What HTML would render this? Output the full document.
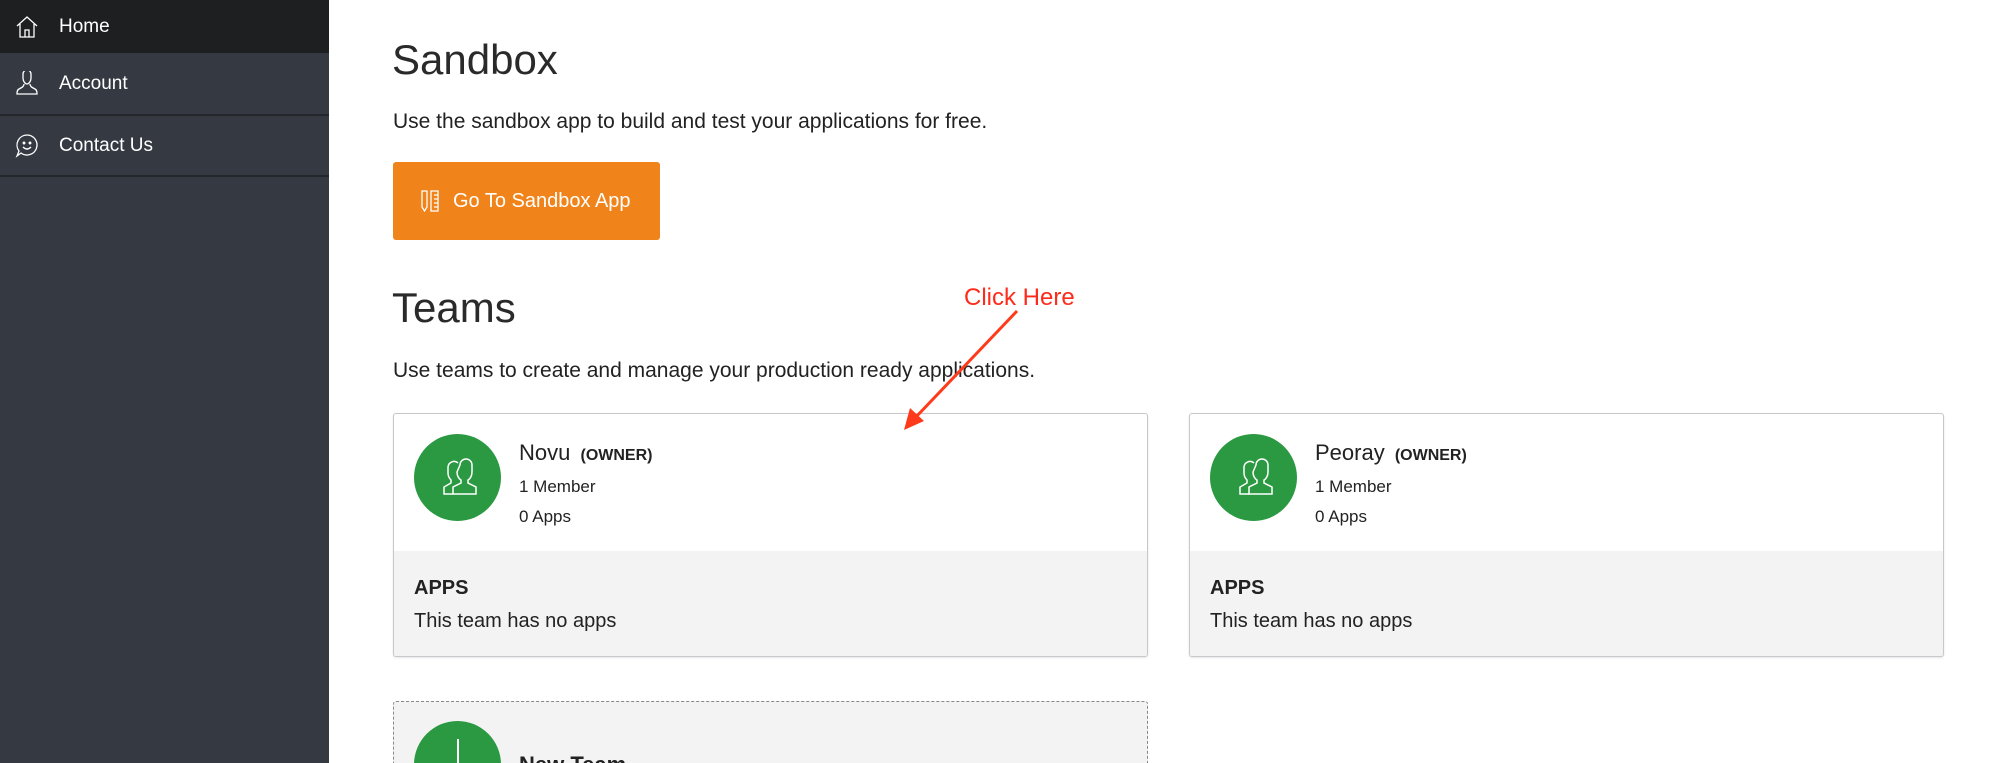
<!DOCTYPE html>
<html style="overflow:hidden;width:2000px;height:763px"><head><meta charset="utf-8"><style>
*{margin:0;padding:0;box-sizing:border-box}
body{width:2000px;height:763px;overflow:hidden;background:#fff;font-family:"Liberation Sans",sans-serif;color:#222;position:relative}
.side{position:absolute;left:0;top:0;width:329px;height:763px;background:#353942}
.item{position:absolute;left:0;width:329px;color:#fff;font-size:19px}
.item span{position:absolute;left:59px;top:50%;transform:translateY(-50%)}
.item svg{position:absolute;left:15px;top:50%;transform:translateY(-50%)}
.sep{position:absolute;left:0;width:329px;height:2px;background:#23262b}
.abs{position:absolute;white-space:nowrap}
h1{position:absolute;left:392px;font-weight:normal;font-size:42px;color:#2a2a2a}
.card{position:absolute;top:413px;width:755px;height:244px;border:1px solid #c8c8cc;border-radius:3px;background:#fff;overflow:hidden;box-shadow:0 1px 2px rgba(0,0,0,.1)}
.card .bot{position:absolute;left:0;right:0;top:137px;bottom:0;background:#f3f3f3}
.av{position:absolute;left:20px;top:20px;width:87px;height:87px;border-radius:50%;background:#2b9942}
</style></head><body>
<div class="side">
 <div class="item" style="top:0;height:53px;background:#1e1f21"><svg width="24" height="24" viewBox="0 0 24 24" fill="none" stroke="#fff" stroke-width="1.3"><path d="M2 11L12 2l10 9M5 9v13h14V9M10 22v-7h4v7"/></svg><span>Home</span></div>
 <div class="item" style="top:53px;height:61px"><svg width="24" height="26" viewBox="0 0 24 26" fill="none" stroke="#fff" stroke-width="1.3"><path d="M8 3a4 4 0 0 1 8 0v4c0 3-2 6-4 6s-4-3-4-6zM9 13c0 2-1 3-5 5-2 1-2 3-2 5h20c0-2 0-4-2-5-4-2-5-3-5-5"/></svg><span>Account</span></div>
 <div class="sep" style="top:114px"></div>
 <div class="item" style="top:116px;height:60px"><svg width="24" height="26" viewBox="0 0 24 26" fill="none" stroke="#fff" stroke-width="1.3"><path d="M12 2a10 10 0 1 1-6 18l-4 3 2-5A10 10 0 0 1 12 2z"/><circle cx="9" cy="10" r=".8" fill="#fff"/><circle cx="15" cy="10" r=".8" fill="#fff"/><path d="M8 14q4 4 8 0"/></svg><span>Contact Us</span></div>
 <div class="sep" style="top:175px"></div>
</div>
<h1 style="top:36px">Sandbox</h1>
<div class="abs" style="left:393px;top:110px;font-size:21px">Use the sandbox app to build and test your applications for free.</div>
<div class="abs" style="left:393px;top:162px;width:267px;height:78px;background:#f0841a;border-radius:3px;color:#fff;font-size:20px;line-height:78px;padding-left:60px">Go To Sandbox App
 <svg style="position:absolute;left:27px;top:27px" width="22" height="24" viewBox="0 0 22 24" fill="none" stroke="#fff" stroke-width="1.3"><path d="M2 2h5v16l-2.5 4L2 18zM11 2h7v20h-7zM14 6h4M14 10h4M14 14h4M14 18h4"/></svg></div>
<h1 style="top:284px">Teams</h1>
<div class="abs" style="left:393px;top:359px;font-size:21px">Use teams to create and manage your production ready applications.</div>
<div class="card" style="left:393px">
 <div class="av"><svg width="87" height="87" viewBox="0 0 87 87" fill="none" stroke="#fff" stroke-width="1.5"><path d="M46 31a6 6 0 0 1 12 0v7c0 4-2 7-4 8v3l8 4v7H39v-7l8-4v-3c-2-1-4-4-4-8z"/><path d="M44 29a6 6 0 0 0-10 4v6c0 4 2 6 3 7v3l-7 4v7h9"/></svg></div>
 <div class="abs" style="left:125px;top:26px;font-size:22px">Novu <span style="font-size:16px;font-weight:bold;margin-left:4px">(OWNER)</span></div>
 <div class="abs" style="left:125px;top:63px;font-size:17px">1 Member</div>
 <div class="abs" style="left:125px;top:93px;font-size:17px">0 Apps</div>
 <div class="bot"><div class="abs" style="left:20px;top:26px;font-size:20px;font-weight:bold">APPS</div><div class="abs" style="left:20px;top:59px;font-size:20px">This team has no apps</div></div>
</div>
<div class="card" style="left:1189px">
 <div class="av"><svg width="87" height="87" viewBox="0 0 87 87" fill="none" stroke="#fff" stroke-width="1.5"><path d="M46 31a6 6 0 0 1 12 0v7c0 4-2 7-4 8v3l8 4v7H39v-7l8-4v-3c-2-1-4-4-4-8z"/><path d="M44 29a6 6 0 0 0-10 4v6c0 4 2 6 3 7v3l-7 4v7h9"/></svg></div>
 <div class="abs" style="left:125px;top:26px;font-size:22px">Peoray <span style="font-size:16px;font-weight:bold;margin-left:4px">(OWNER)</span></div>
 <div class="abs" style="left:125px;top:63px;font-size:17px">1 Member</div>
 <div class="abs" style="left:125px;top:93px;font-size:17px">0 Apps</div>
 <div class="bot"><div class="abs" style="left:20px;top:26px;font-size:20px;font-weight:bold">APPS</div><div class="abs" style="left:20px;top:59px;font-size:20px">This team has no apps</div></div>
</div>
<div style="position:absolute;left:393px;top:701px;width:755px;height:62px;border:1px dashed #888;border-bottom:none;border-radius:3px 3px 0 0;background:#f3f3f3;overflow:hidden">
 <div class="av" style="top:19px"><div style="position:absolute;left:43px;top:18px;width:1.5px;height:30px;background:#fff"></div></div>
 <div class="abs" style="left:125px;top:50px;font-size:22px;font-weight:bold">New Team</div>
</div>
<div class="abs" style="left:964px;top:284px;font-size:24px;color:#ff2a1a">Click Here</div>
<svg style="position:absolute;left:0;top:0" width="2000" height="763"><line x1="1017" y1="311" x2="915" y2="418" stroke="#ff3a1a" stroke-width="3"/><path d="M904 430l6-22 14 13z" fill="#ff3a1a"/></svg>
</body></html>
